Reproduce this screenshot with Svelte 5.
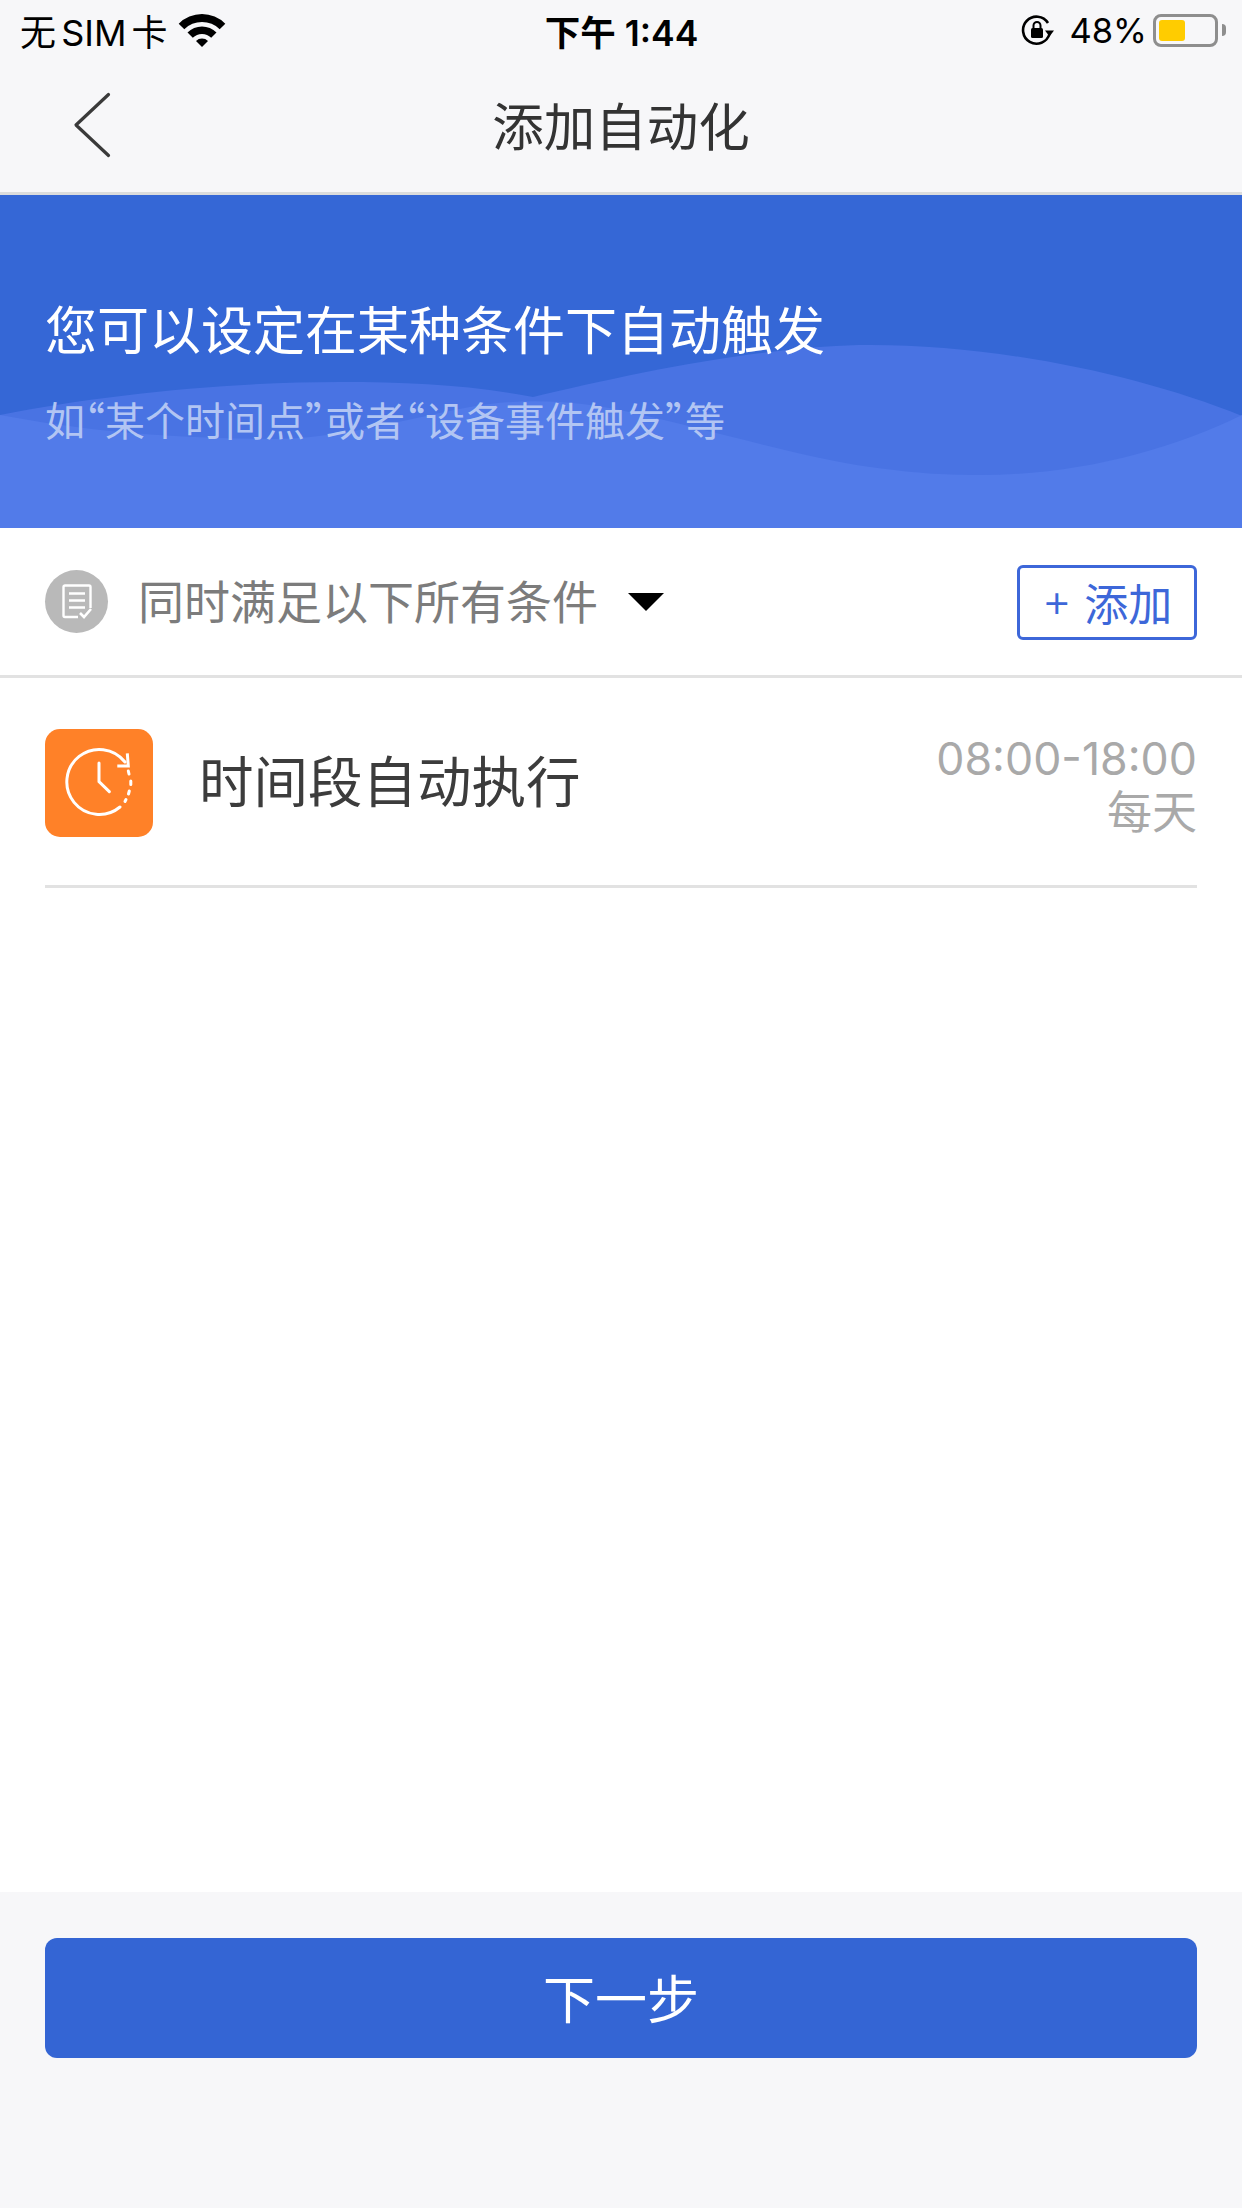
<script>
	// Single automation condition for now
	const rule = { title: '时间段自动执行', time: '08:00-18:00', repeat: '每天' };
</script>

<div class="page">
	<header class="top">
		<div class="status">
			<div class="status-left">
				<span class="carrier">无 SIM 卡</span>
				<svg class="wifi" viewBox="-1 0 48 33" width="48" height="33">
					<path d="M-0.3 9.700 A33 33 0 0 1 46.300 9.700 L40.700 15.300 A25 25 0 0 0 5.300 15.300 Z" fill="#000" />
					<path d="M8.500 18.500 A20.500 20.500 0 0 1 37.500 18.500 L32.200 23.800 A13 13 0 0 0 13.800 23.800 Z" fill="#000" />
					<path d="M17 27 A8.500 8.500 0 0 1 29 27 L23 33 Z" fill="#000" />
				</svg>
			</div>
			<div class="clock">下午 1:44</div>
			<div class="status-right">
				<svg class="lock" viewBox="0 0 34 32" width="34" height="32">
					<path d="M28.500 20 A13.500 13.500 0 1 1 27 9" fill="none" stroke="#000" stroke-width="2.600" />
					<path d="M24 16.500 L33 16.500 L28.500 22.500 Z" fill="#000" />
					<rect x="10" y="14" width="12" height="10" rx="1.500" fill="#000" />
					<path d="M12.500 14 V11.500 A3.500 3.500 0 0 1 19.500 11.500 V14" fill="none" stroke="#000" stroke-width="2" />
				</svg>
				<span class="percent">48%</span>
				<div class="battery">
					<div class="battery-body"><div class="battery-fill"></div></div>
					<div class="battery-tip"></div>
				</div>
			</div>
		</div>
		<nav class="nav">
			<svg class="back" viewBox="0 0 40 70" width="40" height="70">
				<path d="M36.500 4.500 L4 35 L36.500 65.500" fill="none" stroke="#3a3a3a" stroke-width="3.200" stroke-linecap="round" stroke-linejoin="round" />
			</svg>
			<h1>添加自动化</h1>
		</nav>
	</header>

	<section class="hero">
		<svg class="waves" viewBox="0 0 1242 333" preserveAspectRatio="none">
			<path d="M0 220 C100 200 230 187 340 187 C410 187 470 190 533 202 C600 186 690 166 770 157 C810 152 840 150 870 150 C1000 150 1140 180 1242 221 L1242 333 L0 333 Z" fill="#4973e3" />
			<path d="M0 220 C80 235 160 243 270 244 C340 244 400 225 470 212 C520 203 570 205 620 215 C700 232 800 262 870 272 C920 279 950 280 980 280 C1080 280 1170 255 1242 220 L1242 333 L0 333 Z" fill="#527be9" />
		</svg>
		<div class="hero-text">
			<h2>您可以设定在某种条件下自动触发</h2>
			<p>如“某个时间点”或者“设备事件触发”等</p>
		</div>
	</section>

	<div class="filter">
		<div class="filter-icon">
			<svg viewBox="0 0 30 36" width="30" height="36">
				<path d="M16 33 H3 A1.500 1.500 0 0 1 1.500 31.500 V3 A1.500 1.500 0 0 1 3 1.500 H27 A1.500 1.500 0 0 1 28.500 3 V24" fill="none" stroke="#fff" stroke-width="2.400" />
				<path d="M7 9.500 H23 M7 16.500 H23 M7 23.500 H23" stroke="#fff" stroke-width="2.400" />
				<path d="M18 29 L22 33 L29 25" fill="none" stroke="#fff" stroke-width="2.600" />
			</svg>
		</div>
		<span class="filter-label">同时满足以下所有条件</span>
		<span class="caret"></span>
		<button class="add"><span class="plus">+</span> 添加</button>
	</div>

	<div class="list">
		<div class="item">
			<div class="item-icon">
				<svg viewBox="0 0 108 108" width="108" height="108">
					<path d="M80 33 A32.500 32.500 0 1 0 75 78" fill="none" stroke="#fff" stroke-width="3" stroke-linecap="round" />
					<path d="M72.300 37 H83.300 L82.300 24.300" fill="none" stroke="#fff" stroke-width="3" />
					<path d="M54 34 V52.700 L64.300 62.700" fill="none" stroke="#fff" stroke-width="3" stroke-linecap="round" />
					<path d="M83.300 42 L84 45 M85.800 52 V55.500 M84.300 62 L83.500 65 M81 70.500 L80 72.500" fill="none" stroke="#fff" stroke-width="3" stroke-linecap="round" />
				</svg>
			</div>
			<span class="item-title">{rule.title}</span>
			<div class="item-meta">
				<span class="time">{rule.time}</span>
				<span class="repeat">{rule.repeat}</span>
			</div>
		</div>
	</div>

	<footer class="bottom">
		<button class="next">下一步</button>
	</footer>
</div>

<style>
	:global(body) {
		margin: 0;
		background: #fff;
	}

	.page {
		width: 1242px;
		height: 2208px;
		display: flex;
		flex-direction: column;
		font-family: "Inter", "Noto Sans CJK SC", sans-serif;
		color: #333;
	}

	.top {
		height: 192px;
		background: #f7f7f9;
		border-bottom: 3px solid #dcdcdc;
	}

	.status {
		height: 60px;
		padding: 0 16px 0 20px;
		display: flex;
		align-items: center;
		justify-content: space-between;
		color: #000;
	}

	.status-left,
	.status-right {
		display: flex;
		align-items: center;
	}

	.status-left {
		width: 397px;
		gap: 10px;
	}

	.status-right {
		width: 400px;
		justify-content: flex-end;
		gap: 14px;
	}

	.carrier {
		font-size: 36px;
		word-spacing: -5px;
	}

	.clock {
		font-size: 35.500px;
		font-weight: 600;
	}

	.percent {
		font-size: 34.500px;
	}

	.battery {
		display: flex;
		align-items: center;
		gap: 4px;
		margin-left: -8px;
	}

	.battery-body {
		width: 65px;
		height: 33px;
		box-sizing: border-box;
		border: 3px solid #8e8e8e;
		border-radius: 8px;
		padding: 3px;
	}

	.battery-fill {
		width: 26px;
		height: 100%;
		background: #ffcc00;
		border-radius: 3px;
	}

	.battery-tip {
		width: 4px;
		height: 12px;
		background: #8e8e8e;
		border-radius: 0 4px 4px 0;
	}

	.nav {
		position: relative;
		height: 132px;
		display: flex;
		align-items: center;
		justify-content: center;
	}

	.back {
		position: absolute;
		left: 72px;
		top: 30px;
	}

	h1 {
		margin: 0 0 6px 0;
		font-size: 51.500px;
		font-weight: 400;
		color: #333;
	}

	.hero {
		position: relative;
		height: 333px;
		background: #3567d6;
		overflow: hidden;
	}

	.waves {
		position: absolute;
		inset: 0;
		width: 100%;
		height: 100%;
	}

	.hero-text {
		position: relative;
		padding: 102px 45px 0;
	}

	h2 {
		margin: 0;
		font-size: 52px;
		line-height: 70px;
		font-weight: 400;
		color: #fff;
	}

	.hero-text p {
		margin: 27px 0 0;
		font-family: "Noto Sans CJK SC", sans-serif;
		font-feature-settings: "halt";
		font-size: 40px;
		line-height: 50px;
		color: #b2c5f3;
	}

	.filter {
		height: 147px;
		padding: 0 45px;
		display: flex;
		align-items: center;
		border-bottom: 3px solid #e2e2e2;
	}

	.filter-icon {
		width: 63px;
		height: 63px;
		border-radius: 50%;
		background: #b9b9b9;
		display: flex;
		align-items: center;
		justify-content: center;
		margin-right: 30px;
	}

	.filter-label {
		font-size: 46px;
		color: #7c7c7c;
		padding-bottom: 5px;
	}

	.caret {
		width: 0;
		height: 0;
		margin-left: 30px;
		border-left: 18px solid transparent;
		border-right: 18px solid transparent;
		border-top: 18px solid #000;
	}

	.add {
		margin-left: auto;
		margin-top: 2px;
		width: 180px;
		height: 75px;
		padding: 0 0 2px;
		background: #fff;
		border: 3px solid #3d67d9;
		border-radius: 6px;
		color: #3d67d9;
		font-family: inherit;
		font-size: 44px;
		white-space: nowrap;
	}

	.plus {
		font-size: 46px;
		font-weight: 300;
		vertical-align: 4px;
	}

	.list {
		flex: 1;
		padding: 0 45px;
	}

	.item {
		height: 207px;
		display: flex;
		align-items: center;
		border-bottom: 3px solid #e2e2e2;
	}

	.item-icon {
		width: 108px;
		height: 108px;
		margin-top: 3px;
		border-radius: 15px;
		background: #ff8128;
		display: flex;
		align-items: center;
		justify-content: center;
		margin-right: 46px;
	}

	.item-title {
		font-size: 54.500px;
		color: #3c3c3c;
		padding-bottom: 6px;
	}

	.item-meta {
		margin-left: auto;
		padding-top: 9px;
		display: flex;
		flex-direction: column;
		align-items: flex-end;
		color: #a9a9a9;
	}

	.time {
		font-size: 44.700px;
		line-height: 52px;
	}

	.repeat {
		font-size: 45px;
		line-height: 55px;
	}

	.bottom {
		height: 316px;
		box-sizing: border-box;
		background: #f7f7f9;
		padding: 46px 45px 0;
	}

	.next {
		display: block;
		width: 100%;
		height: 120px;
		padding: 0 0 4px;
		border: none;
		border-radius: 12px;
		background: #3465d4;
		color: #fff;
		font-family: inherit;
		font-size: 52px;
	}
</style>
